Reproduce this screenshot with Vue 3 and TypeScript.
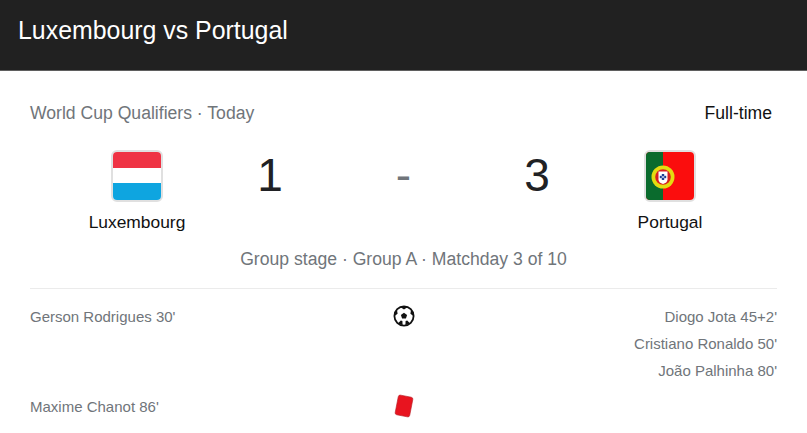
<template>
  <div class="page">
    <header class="topbar">
      <h1 class="title">Luxembourg vs Portugal</h1>
    </header>

    <main class="content">
      <div class="meta">
        <span class="competition">World Cup Qualifiers · Today</span>
        <span class="status">Full-time</span>
      </div>

      <div class="score-row">
        <div class="team">
          <span class="flag">
            <svg width="48" height="48" viewBox="0 0 48 48">
              <rect width="48" height="16" fill="#ef3344" />
              <rect y="16" width="48" height="15" fill="#ffffff" />
              <rect y="31" width="48" height="17" fill="#0ea5e0" />
            </svg>
          </span>
          <span class="team-name">Luxembourg</span>
        </div>
        <span class="goals">1</span>
        <span class="dash">-</span>
        <span class="goals">3</span>
        <div class="team">
          <span class="flag">
            <svg width="48" height="48" viewBox="0 0 48 48">
              <rect width="48" height="48" fill="#fb0d0d" />
              <rect width="17" height="48" fill="#0a6b2d" />
              <circle cx="17" cy="25" r="11.500" fill="#e4dc10" />
              <circle cx="17" cy="25" r="7.800" fill="#d82020" />
              <path d="M12.500 19.500h9v8c0 2.400-2 3.800-4.500 4.500-2.500-.7-4.500-2.100-4.500-4.500z" fill="#fff" />
              <rect x="15.800" y="22" width="2.400" height="2.400" fill="#1c3f94" />
              <rect x="15.800" y="25.600" width="2.400" height="2.400" fill="#1c3f94" />
              <rect x="13.800" y="23.800" width="2" height="2.400" fill="#1c3f94" />
              <rect x="18.200" y="23.800" width="2" height="2.400" fill="#1c3f94" />
            </svg>
          </span>
          <span class="team-name">Portugal</span>
        </div>
      </div>

      <p class="stage">Group stage · Group A · Matchday 3 of 10</p>

      <div class="events">
        <div v-for="row in rows" :key="row.icon" class="event-row">
          <div class="players">
            <span v-for="name in row.home" :key="name">{{ name }}</span>
          </div>
          <div class="event-icon">
            <svg v-if="row.icon === 'goal'" width="22" height="22" viewBox="0 0 22 22">
              <circle cx="11" cy="11" r="9.600" fill="#fff" stroke="#111" stroke-width="1.800" />
              <path d="M11 7.800l3.100 2.300-1.200 3.500H9.100l-1.200-3.500z" fill="#111" />
              <path d="M7.600 2.200L11 4.400l3.400-2.200L11 1.200zM18 5l-.6 3.800 3 2.200.2-3.400zM4 5l.6 3.800-3 2.200-.2-3.400zM4.800 18.400l3-3 1.600.5.200 4.400zM17.200 18.400l-3-3-1.600.5-.2 4.400z" fill="#111" />
            </svg>
            <svg v-else width="20" height="24" viewBox="0 0 20 24">
              <rect x="2.600" y="2" width="14.800" height="20" rx="2" fill="#e8141f" stroke="#b81c24" stroke-width="0.600" transform="rotate(11 10 12)" />
            </svg>
          </div>
          <div class="players players-away">
            <span v-for="name in row.away" :key="name">{{ name }}</span>
          </div>
        </div>
      </div>
    </main>
  </div>
</template>

<script setup lang="ts">
interface EventRow {
  icon: 'goal' | 'red';
  home: string[];
  away: string[];
}

const rows: EventRow[] = [
  {
    icon: 'goal',
    home: ["Gerson Rodrigues 30'"],
    away: ["Diogo Jota 45+2'", "Cristiano Ronaldo 50'", "João Palhinha 80'"]
  },
  {
    icon: 'red',
    home: ["Maxime Chanot 86'"],
    away: []
  }
];
</script>

<style scoped>
.page {
  width: 807px;
  height: 433px;
  overflow: hidden;
  background: #fff;
  font-family: "Liberation Sans", Arial, sans-serif;
}

.topbar {
  height: 70px;
  padding-left: 18px;
  display: flex;
  align-items: center;
  background: #212121;
  border-bottom: 1px solid #5f5f5f;
}

.title {
  margin: 0 0 9px;
  font-size: 24.9px;
  font-weight: 400;
  color: #fff;
}

.content {
  padding: 32px 30px 0;
}

.meta {
  display: flex;
  justify-content: space-between;
  align-items: center;
  font-size: 17.6px;
  line-height: 20px;
}

.competition {
  color: #70757a;
}

.status {
  color: #111;
  margin-right: 5px;
}

.score-row {
  display: grid;
  grid-template-columns: 214px 52px 1fr 52px 214px;
  margin-top: 27px;
  align-items: start;
}

.team {
  display: flex;
  flex-direction: column;
  align-items: center;
  gap: 10px;
}

.flag {
  width: 48px;
  height: 48px;
  border: 2px solid #e0e0e0;
  border-radius: 6px;
  overflow: hidden;
  display: block;
}

.flag svg {
  display: block;
}

.team-name {
  font-size: 17.4px;
  line-height: 20px;
  color: #111;
}

.goals,
.dash {
  text-align: center;
  font-size: 46px;
  line-height: 50px;
  color: #202124;
}

.dash {
  color: #70757a;
}

.stage {
  margin: 17px 0 0;
  text-align: center;
  font-size: 17.6px;
  line-height: 20px;
  color: #70757a;
}

.events {
  margin-top: 19px;
  padding-top: 14px;
  border-top: 1px solid #ebebeb;
}

.event-row {
  display: grid;
  grid-template-columns: 1fr 40px 1fr;
  margin-bottom: 9px;
}

.players {
  display: flex;
  flex-direction: column;
  font-size: 15px;
  line-height: 27px;
  color: #70757a;
}

.players-away {
  text-align: right;
}

.event-icon {
  display: flex;
  justify-content: center;
  align-items: center;
  height: 26px;
}
</style>
